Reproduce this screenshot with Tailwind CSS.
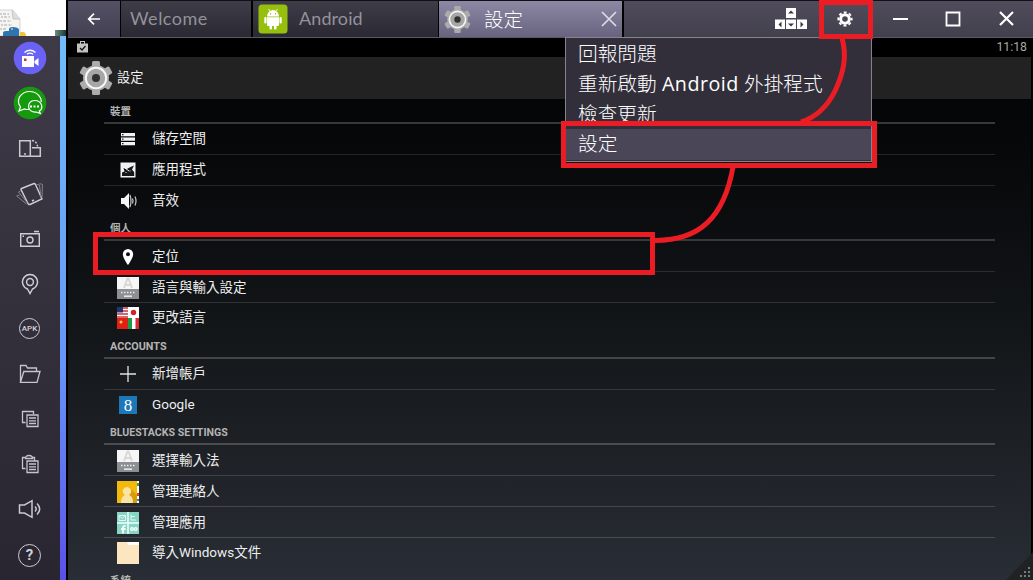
<!DOCTYPE html>
<html lang="zh-Hant">

<head>
  <meta charset="UTF-8" />
  <title>設定</title>
  <script src="https://cdn.jsdelivr.net/npm/@tailwindcss/browser@4"></script>
</head>

<body class="bg-black overflow-hidden">

  <!-- Shared icons -->
  <svg class="hidden">
    <symbol id="gear" viewBox="0 0 34 34">
      <g fill="#acacac">
        <rect x="13" y="0" width="8" height="34" rx="1.5" />
        <rect x="13" y="0" width="8" height="34" rx="1.5" transform="rotate(60 17 17)" />
        <rect x="13" y="0" width="8" height="34" rx="1.5" transform="rotate(120 17 17)" />
        <circle cx="17" cy="17" r="13" />
      </g>
      <circle cx="17" cy="17" r="10.2" fill="#a6a6a6" stroke="#f6f6f6" stroke-width="2" />
      <circle cx="17" cy="17" r="4" fill="#303030" />
    </symbol>
    <symbol id="keyboard" viewBox="0 0 22 22">
      <path fill="#f6f6f6" d="M0 0h22v12H0z" />
      <path fill="#8d9093" d="M0 12h22v10H0z" />
      <path fill="none" stroke="#d8d8d8" stroke-width="2" d="M7 11L10.5 1.500h1L15 11M8.500 8h5" />
      <path stroke="#eee" stroke-width="1.500" stroke-dasharray="1.500 1.500" d="M4 15.500h14" />
      <path stroke="#eee" stroke-width="1.500" d="M7 19.200h8" />
    </symbol>
  </svg>

  <div class="relative flex w-[1033px] h-[580px] overflow-hidden">

    <!-- Sidebar -->
    <aside class="w-[68px] shrink-0 flex flex-col">
      <div class="h-9 w-[66px] bg-white flex justify-between items-end overflow-hidden">
        <svg width="28" height="27" viewBox="0 0 28 27">
          <path fill="#f4f4f2" stroke="#c4c4c4" stroke-width=".7" d="M-1 1h14l7 9v17H-1z" />
          <path fill="#ddd" stroke="#b0b0b0" stroke-width=".6" d="M12 1l1 9h7" />
          <path stroke="#aaa" stroke-width="1" stroke-dasharray="2 1 3 1.500" d="M0 5h9M1 8h9M0 12h11M1 16h11M0 20h6" />
          <path fill="#2f74ad" d="M3 27v-3q0-2 3-2h3v-2q0-2 4-2t6 2v7z" />
          <circle cx="12" cy="20" r=".8" fill="#fff" />
          <path fill="#f3c23f" d="M20 27v-4h3q3 0 3 4z" />
        </svg>
        <span class="w-[11px] h-[6px] bg-gradient-to-r from-[#6c8b84] to-[#1d3a38]"></span>
      </div>
      <div class="flex-1 flex">
        <nav class="w-[60px] pr-px bg-gradient-to-b from-[#3e3a47] to-[#292631] flex flex-col">
          <div class="h-[45px] pb-px shrink-0 flex items-center justify-center">
            <svg width="34" height="34" viewBox="0 0 34 34">
              <circle cx="17" cy="17" r="16.300" fill="#6a62f4" />
              <path fill="#fff" d="M9 15h12v11H9zM21.500 20l4-3v8l-4-3z" />
              <path fill="#c33" d="M11 17.500h2.500V20H11z" />
              <path fill="none" stroke="#fff" stroke-width="1.300" d="M11.500 11.500q5.500-4.500 11 0M14 13.300q3-2.300 6 0" />
            </svg>
          </div>
          <div class="h-[45px] pb-px shrink-0 flex items-center justify-center">
            <svg width="34" height="34" viewBox="0 0 34 34">
              <circle cx="17" cy="17" r="16.300" fill="#159a0e" />
              <path fill="none" stroke="#fff" stroke-width="1.200" d="M17 23q-3 1-5.500 0l-5.500 2 1.500-4Q4 16.500 6.500 11 10 5.500 17 5.500T27.500 12q.9 2 .7 4" />
              <path fill="none" stroke="#fff" stroke-width="1.200" d="M21.500 14.500c8 0 9 8 4.800 10.500l1 2.500-4-1.500c-10 1-10-11.500-1.800-11.500z" />
              <path stroke="#fff" stroke-width="2" stroke-dasharray="2 1.500" d="M17 20.500h9" />
            </svg>
          </div>
          <!-- Rotate -->
          <div class="h-[45px] shrink-0 flex items-center justify-center">
            <svg width="24" height="24" viewBox="0 0 24 24" fill="none" stroke="#cac8d0" stroke-width="1.500">
              <path d="M1.700 3.700h10.600v15.600H1.700zM14 10.700h8.300v8.600H12.500M6 17h2" />
              <path stroke-dasharray="2 1.500" d="M14 3.500q5 1 5.500 6" />
            </svg>
          </div>
          <!-- Shake -->
          <div class="h-[45px] shrink-0 flex items-center justify-center">
            <svg width="28" height="26" viewBox="0 0 28 26" fill="none" stroke="#d0ced6">
              <path stroke-width="1.400" d="M5.500 7.500L18 2.500q1 0 1.500 1L26 18l-12 5.500q-1.500.3-2-1L5 8.500q0-.8.500-1zM16 20l2-1" />
              <path stroke="#85828d" d="M4.500 10L2.500 11l8.500 10.500M3.500 14L.700 15l9.800 8M20.500 3.500l3 .4 1.500 13M23.500 2.500l3 1L26 16" />
            </svg>
          </div>
          <!-- Screenshot -->
          <div class="h-[45px] shrink-0 flex items-center justify-center">
            <svg width="22" height="20" viewBox="0 0 22 20" fill="none" stroke="#cecdd4" stroke-width="1.400">
              <path d="M1.700 4.700h18.600v12.600H1.700zM15 2.500h5M3.500 7.300h1.500" />
              <circle cx="11" cy="11" r="3" />
            </svg>
          </div>
          <!-- Location -->
          <div class="h-[45px] shrink-0 flex items-center justify-center">
            <svg width="20" height="22" viewBox="0 0 20 22" fill="none" stroke="#cecdd4" stroke-width="1.500">
              <path d="M10 20.500L7.500 16a7.500 7.500 0 1 1 5 0z" />
              <circle cx="10" cy="9" r="3.400" />
            </svg>
          </div>
          <!-- APK -->
          <div class="h-[45px] shrink-0 flex items-center justify-center">
            <span class="size-[21px] rounded-full border-[1.5px] border-[#cecdd4] flex items-center justify-center pt-px text-[8px] leading-none font-medium text-[#d6d4dc] font-['Roboto',sans-serif]">APK</span>
          </div>
          <!-- Folder -->
          <div class="h-[45px] shrink-0 flex items-center justify-center">
            <svg width="22" height="20" viewBox="0 0 22 20" fill="none" stroke="#c6c4cc" stroke-width="1.300">
              <path d="M1.500 18V1.500h5.500l1.500 2.500h9v3.500M1.500 18.300l3.300-10.800H21l-3 10.800z" />
            </svg>
          </div>
          <!-- Copy -->
          <div class="h-[45px] shrink-0 flex items-center justify-center">
            <svg width="18" height="18" viewBox="0 0 18 18" fill="none" stroke="#c6c4cc" stroke-width="1.300">
              <path d="M4.500 12.500h-3v-11h11v2.500M6 5h11v11.500H6zM8 8h7M8 10.800h7M8 13.500h7" />
            </svg>
          </div>
          <!-- Paste -->
          <div class="h-[45px] shrink-0 flex items-center justify-center">
            <svg width="18" height="20" viewBox="0 0 18 20" fill="none" stroke="#c6c4cc" stroke-width="1.300">
              <path d="M4.500 14.500h-3v-11H4m7 0h2.500v3M4.500 4.500q0-3 3.500-3t3.500 3zM6 7h11v11.500H6zM8 10h7M8 12.800h7M8 15.500h7" />
            </svg>
          </div>
          <!-- Volume -->
          <div class="h-[45px] shrink-0 flex items-center justify-center">
            <svg width="24" height="20" viewBox="0 0 24 20" fill="none" stroke="#cac8d0" stroke-width="1.500">
              <path d="M1.500 6h5L14 1.700v16.600L6.500 14h-5zM17 7.500q2.500 2.500 0 5M19 4.500q5.500 5.500 0 11" />
            </svg>
          </div>
          <!-- Help -->
          <div class="h-[45px] shrink-0 flex items-center justify-center">
            <span class="size-[23px] mt-[3px] rounded-full border-[1.5px] border-[#cecdd4] flex items-center justify-center text-[15px] leading-none font-bold text-[#d0ced6] font-['Roboto',sans-serif]">?</span>
          </div>
        </nav>
        <div class="w-[6px] bg-gradient-to-b from-[#70bdfa] via-[#6795f7] via-60% to-[#5a50e8]"></div>
      </div>
    </aside>

    <div class="flex-1 flex flex-col">

      <!-- Tabs -->
      <header class="h-[38px] shrink-0 flex gap-px border-t border-t-[#121016] border-b border-b-[#5c5967] bg-black">
        <div class="w-[52px] pb-px bg-gradient-to-b from-[#555165] to-[#444052] flex items-center justify-center">
          <svg width="14" height="12" viewBox="0 0 14 12" fill="none" stroke="#fff" stroke-width="1.700">
            <path d="M13 6H1.500M7 .700L1.700 6 7 11.300" />
          </svg>
        </div>
        <div class="w-[130px] pb-[2px] bg-gradient-to-b from-[#3f3d47] to-[#2a2832] flex items-center pl-[9px] text-[18px] tracking-[0.5px] text-[#93929b] font-['Lato',sans-serif]">Welcome</div>
        <div class="w-[185px] ml-px bg-gradient-to-b from-[#3f3d47] to-[#2a2832] flex items-center pl-[5px] gap-[11px]">
          <svg width="30" height="30" viewBox="0 0 30 30">
            <rect x=".500" y=".500" width="29" height="29" rx="3.500" fill="#97c00e" />
            <g fill="#fff">
              <path d="M9 12.500a6 6.500 0 0 1 12 0zM9 13.200h12V21q0 1-1 1H10q-1 0-1-1z" />
              <rect x="6.300" y="13" width="2.200" height="6.500" rx="1" />
              <rect x="21.500" y="13" width="2.200" height="6.500" rx="1" />
              <rect x="11.500" y="20" width="2.500" height="5.500" rx="1" />
              <rect x="16" y="20" width="2.500" height="5.500" rx="1" />
            </g>
            <path stroke="#fff" stroke-width=".8" d="M10.500 5l1.500 2.500M19.500 5L18 7.500" />
            <circle cx="12.500" cy="9.800" r=".7" fill="#97c00e" />
            <circle cx="17.500" cy="9.800" r=".7" fill="#97c00e" />
          </svg>
          <span class="pb-[2px] text-[18px] text-[#93929b] tracking-[0.1px] font-['Lato',sans-serif]">Android</span>
        </div>
        <div class="w-[183px] bg-gradient-to-b from-[#8d89a5] to-[#68647f] flex items-center pl-[5px] pr-[5px]">
          <svg width="27" height="27"><use href="#gear" /></svg>
          <span class="ml-[13px] text-[19.5px] font-light text-white font-['Noto_Sans_CJK_TC',sans-serif]">設定</span>
          <svg class="ml-auto" width="16" height="16" viewBox="0 0 16 16" stroke="#dddbe6" stroke-width="1.700">
            <path d="M1 1l14 14M15 1L1 15" />
          </svg>
        </div>
        <div class="flex-1 ml-px pb-px bg-gradient-to-b from-[#504c5b] to-[#43404e] flex items-center">
          <svg class="ml-[151px]" width="32" height="22" viewBox="0 0 32 22">
            <path fill="#fff" d="M11 0h10v10H11zM0 11.500h10v9.500H0zM11 11.500h10v9.500H11zM22 11.500h10v9.500H22z" />
            <path fill="#3b3845" d="M13 5.500l3-3 3 3zM6.500 13.500v6l-3-3zM13 15.500h6l-3 3zM25.500 13.500v6l3-3z" />
          </svg>
          <svg class="ml-[30px]" width="16" height="16" viewBox="0 0 16 16">
            <circle cx="8" cy="8" r="4.300" fill="none" stroke="#fff" stroke-width="3" />
            <circle cx="8" cy="8" r="6.600" fill="none" stroke="#fff" stroke-width="2" stroke-dasharray="2.880 2.300" stroke-dashoffset="1.440" />
          </svg>
          <svg class="ml-[40px]" width="16" height="16" viewBox="0 0 16 16"><path fill="#fff" d="M0 7h15v2H0z" /></svg>
          <svg class="ml-[36px]" width="16" height="16" viewBox="0 0 16 16"><path fill="none" stroke="#fff" stroke-width="1.800" d="M1.500 1.500h13v13h-13z" /></svg>
          <svg class="ml-[38px]" width="15" height="15" viewBox="0 0 15 15"><path stroke="#fff" stroke-width="2.200" d="M1 1l13 13M14 1L1 14" /></svg>
        </div>
      </header>

      <!-- Android status bar -->
      <div class="h-[19px] shrink-0 bg-black flex items-center justify-between pl-[9px] pr-[6px]">
        <svg class="mb-px" width="11" height="12" viewBox="0 0 11 12">
          <path fill="#c2c2c2" d="M0 2.500h3V0h5v2.500h3v9H0zM4 1v1.500h3V1z" />
          <path fill="none" stroke="#111" stroke-width="1.200" d="M3 7l2 2 3.500-4" />
        </svg>
        <span class="text-[12.3px] leading-none text-[#a8a8a8] font-['Roboto',sans-serif]">11:18</span>
      </div>

      <!-- Action bar -->
      <div class="h-[42px] shrink-0 mr-[2px] bg-[#222222] flex items-center pl-[11px] gap-1">
        <svg width="34" height="34"><use href="#gear" /></svg>
        <span class="text-[13.2px] text-[#f0f0f0] font-['Roboto','Noto_Sans_CJK_TC',sans-serif]">設定</span>
      </div>

      <!-- Settings list -->
      <main class="flex-1 min-h-0 overflow-hidden mr-[2px] pl-9 pr-9 bg-gradient-to-b from-[#040506] via-[#14171a] via-50% to-[#292d35] text-[13.5px] leading-none text-[#eeeeee] font-['Roboto','Noto_Sans_CJK_TC',sans-serif]">

        <h2 class="h-[25px] pl-[6px] pt-[3px] flex items-center border-b-2 border-[#36383a] text-[10.5px] font-bold text-[#b4b4b4]">裝置</h2>
        <div class="h-[31px] pl-[13px] flex items-center gap-[13px] border-b border-[#242628]">
          <svg width="22" height="22" viewBox="0 0 22 22">
            <path fill="#f2f2f2" d="M4 5h14v3.200H4zM4 9.500h14v3.200H4zM4 14h14v3.200H4z" />
            <path fill="#222" d="M5 6h1.500v1.200H5zM5 10.500h1.500v1.200H5zM5 15h1.500v1.200H5z" />
          </svg>
          <span>儲存空間</span>
        </div>
        <div class="h-[31px] pl-[13px] flex items-center gap-[13px] border-b border-[#242628]">
          <svg width="22" height="22" viewBox="0 0 22 22">
            <path fill="#f2f2f2" d="M3.500 3.500h15v15h-15z" />
            <path fill="#15171a" d="M5 17v-3.500l2.500-1L6.500 9l3 1.200L13.500 8l3.500-1.500-2 4 2.200 2.800V17z" />
            <path stroke="#f2f2f2" d="M8.500 13.500h1M12.500 12h1M8 9l4 3" />
          </svg>
          <span>應用程式</span>
        </div>
        <div class="h-[31px] pl-[13px] pb-px flex items-center gap-[13px]">
          <svg width="22" height="22" viewBox="0 0 22 22">
            <path fill="#f5f5f5" d="M4 8h3l5-5v16l-5-5H4z" />
            <path fill="none" stroke="#c8c8c8" stroke-width="1.200" d="M13 5q2 6 0 12M15.500 8.500q1 2.500 0 5M18 6.500q2 4.500 0 9" />
          </svg>
          <span>音效</span>
        </div>

        <h2 class="h-[24px] pl-[6px] pt-[3px] flex items-center border-b-2 border-[#36383a] text-[10.5px] font-bold text-[#b4b4b4]">個人</h2>
        <div class="h-[31px] pl-[13px] pt-px flex items-center gap-[13px] border-b border-[#2a2c2e]">
          <svg width="22" height="22" viewBox="0 0 22 22">
            <path fill="#fff" fill-rule="evenodd" d="M11 3a5.200 5.200 0 0 1 5.200 5.200C16.200 12 11 19 11 19S5.800 12 5.800 8.200A5.200 5.200 0 0 1 11 3zm0 3.200a2 2 0 1 0 0 4 2 2 0 0 0 0-4z" />
          </svg>
          <span>定位</span>
        </div>
        <div class="h-[31px] pl-[13px] pt-px flex items-center gap-[13px] border-b border-[#303234]">
          <svg width="22" height="22"><use href="#keyboard" /></svg>
          <span>語言與輸入設定</span>
        </div>
        <div class="h-[31px] pl-[13px] pb-px flex items-center gap-[13px]">
          <svg width="22" height="22" viewBox="0 0 22 22">
            <path fill="#fff" d="M0 0h22v22H0z" />
            <path stroke="#c8343c" stroke-width="1.500" d="M0 1h11M0 4h11M0 7h11M0 10h11" />
            <path fill="#26336e" d="M0 0h6v5.500H0z" />
            <path fill="#de2018" d="M0 11h11v11H0z" />
            <circle cx="4" cy="15" r="1.500" fill="#ffd23c" />
            <circle cx="16.500" cy="5.500" r="2.700" fill="#cf2332" />
            <path fill="#209a46" d="M11 11h4v11h-4z" />
            <path fill="#d92b36" d="M18.500 11H22v11h-3.500z" />
          </svg>
          <span>更改語言</span>
        </div>

        <h2 class="h-[25px] pl-[6px] pt-[3px] flex items-center border-b-2 border-[#434547] text-[10.8px] font-bold text-[#b4b4b4]">ACCOUNTS</h2>
        <div class="h-[31px] pl-[13px] flex items-center gap-[13px] border-b border-[#36383b]">
          <svg width="22" height="22" viewBox="0 0 22 22"><path stroke="#e2e2e2" stroke-width="1.300" d="M3 11h16M11 3v16" /></svg>
          <span>新增帳戶</span>
        </div>
        <div class="h-[31px] pl-[13px] pb-px flex items-center gap-[13px]">
          <span class="w-[18px] h-[18px] mx-[2px] bg-[#1c78b8] flex items-center justify-center text-[17px] text-white font-['Liberation_Serif',serif]">8</span>
          <span>Google</span>
        </div>

        <h2 class="h-[24px] pl-[6px] pt-[3px] flex items-center border-b-2 border-[#4a4c4f] text-[10.6px] font-bold text-[#b4b4b4]">BLUESTACKS SETTINGS</h2>
        <div class="h-[31px] pl-[13px] pt-px flex items-center gap-[13px] border-b border-[#3f4245]">
          <svg width="22" height="22"><use href="#keyboard" /></svg>
          <span>選擇輸入法</span>
        </div>
        <div class="h-[31px] pl-[13px] pt-px flex items-center gap-[13px] border-b border-[#43464a]">
          <svg width="22" height="22" viewBox="0 0 22 22">
            <path fill="#f3b90c" d="M0 0h22v22H0z" />
            <path fill="#d99c09" d="M12 6l8 8v8H8z" />
            <path fill="#fbe3a2" d="M4 22q0-7 4-8a4.300 4.300 0 1 1 4 0q4 1 4 8z" />
            <path fill="#fff" d="M20 0h2v22h-2z" />
            <path fill="#3a9a58" d="M20 2h2v3h-2z" />
            <path fill="#d9432f" d="M20 12h2v3h-2z" />
            <path fill="#3c80c0" d="M20 18h2v2h-2z" />
          </svg>
          <span>管理連絡人</span>
        </div>
        <div class="h-[31px] pl-[13px] pt-px flex items-center gap-[13px] border-b border-[#484b50]">
          <svg width="22" height="22" viewBox="0 0 22 22">
            <path fill="#86d5c5" d="M0 0h22v22H0z" />
            <path stroke="#f0fffb" stroke-width="1.500" d="M11 0v22M0 11h22" />
            <path fill="none" stroke="#e4f7f2" d="M2 3.500h6.500v5H2zM2 3.500l3.200 3 3.300-3M14 2.500v5.500h5M14 4.500h4" />
            <path fill="none" stroke="#fff" stroke-width="1.800" d="M8.500 14q-2.500-.5-2.500 2v5.500M4 17h4.500" />
            <circle cx="15" cy="17" r="1.300" fill="none" stroke="#fff" stroke-width="1.300" />
            <circle cx="18.700" cy="17" r="1.300" fill="none" stroke="#fff" stroke-width="1.300" />
          </svg>
          <span>管理應用</span>
        </div>
        <div class="h-[31px] pl-[13px] pb-px flex items-center gap-[13px]">
          <svg width="22" height="22" viewBox="0 0 22 22">
            <path fill="#fbe6bf" d="M0 0h22v22H0z" />
            <path fill="#fff" d="M10 0h12v3H11z" />
          </svg>
          <span>導入Windows文件</span>
        </div>

        <h2 class="h-[24px] pl-[6px] pt-px flex items-center text-[10.5px] font-bold text-[#b4b4b4]">系統</h2>
      </main>
    </div>

    <!-- Dropdown menu -->
    <ul class="absolute left-[565px] top-[37px] w-[307px] h-[125px] pt-px border border-[#85838c] bg-[#322f3a] text-[19.7px] leading-[30px] font-light text-white font-['Open_Sans','Noto_Sans_CJK_TC',sans-serif]">
      <li class="h-[30px] pl-3">回報問題</li>
      <li class="h-[30px] pl-3 whitespace-nowrap">重新啟動 <span class="font-normal tracking-[0.5px]">Android</span> 外掛程式</li>
      <li class="h-[30px] pl-3">檢查更新</li>
      <li class="h-[31px] pl-3 bg-[#4a4658]">設定</li>
    </ul>

    <!-- Resize grip -->
    <svg class="absolute right-0 bottom-0" width="27" height="28" viewBox="0 0 27 28">
      <path fill="#212224" d="M27 0v28H0z" />
      <path fill="#77797c" d="M22 15h2v2h-2zM18 19h2v2h-2zM22 19h2v2h-2zM14 23h2v2h-2zM18 23h2v2h-2zM22 23h2v2h-2z" />
    </svg>

    <!-- Red annotations -->
    <svg class="absolute left-0 top-0" width="1033" height="580" fill="none" stroke="#eb1c24" stroke-width="5">
      <rect x="821.500" y="2.500" width="49" height="34" />
      <rect x="563.500" y="123.500" width="311" height="42" />
      <rect x="95.500" y="234.500" width="557" height="38" />
      <path d="M842 38C847 56 844 72 835 91 828 105 817 117 801 122" />
      <path d="M733 167C724 217 700 241 654 240.500" />
    </svg>
  </div>

</body>

</html>
